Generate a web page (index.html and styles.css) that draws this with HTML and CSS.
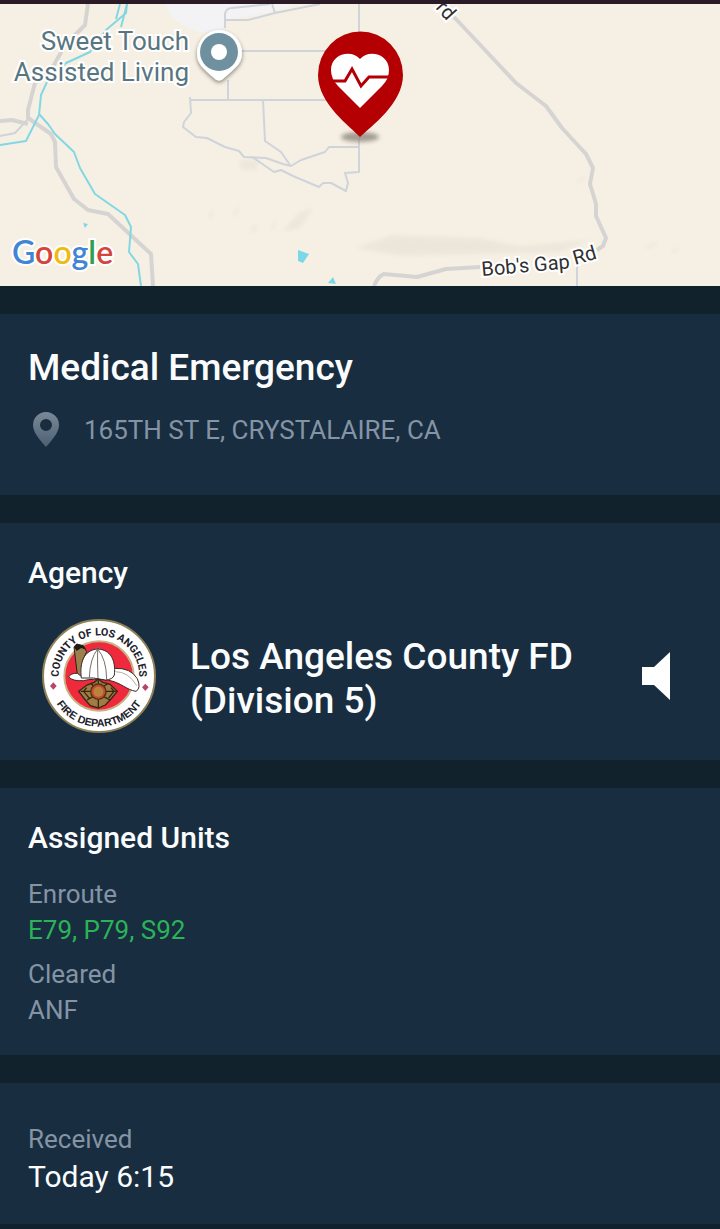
FILE: index.html
```html
<!DOCTYPE html>
<html lang="en">
<head>
  <meta charset="UTF-8">
  <meta name="viewport" content="width=device-width, initial-scale=1.0">
  <title>Medical Emergency</title>
  <link rel="stylesheet" href="styles.css">
</head>
<body>

<div class="map">
  <svg class="map-canvas" viewBox="0 4 720 282" preserveAspectRatio="xMidYMid slice" role="img" aria-label="Incident map">
    <defs>
      <filter id="soft" x="-50%" y="-50%" width="200%" height="200%">
        <feGaussianBlur stdDeviation="2"/>
      </filter>
      <filter id="drop" x="-30%" y="-30%" width="160%" height="170%">
        <feDropShadow dx="0" dy="2" stdDeviation="2" flood-color="#000" flood-opacity=".45"/>
      </filter>
    </defs>
    <rect x="0" y="4" width="720" height="282" fill="#f6f0e4"/>

    <!-- terrain -->
    <path d="M166 4H296L270 12L225 20L222 32H200L188 28L172 18Z" fill="#f3f3f5"/>
    <g fill="#e6e0d5" opacity=".6" filter="url(#soft)">
      <path d="M355 248L392 235L480 238L520 246L590 240L560 252L400 256Z"/>
      <path d="M282 232L298 214L314 206L300 228Z"/>
      <path d="M240 160H258L256 170H240ZM208 216L214 208L212 220ZM232 215L242 203L236 216ZM250 232L256 222V232ZM270 230L276 216L274 228Z"/>
      <path d="M642 248L660 241L652 248ZM670 253L680 245L676 253ZM576 182L586 174L582 182Z"/>
    </g>

    <!-- minor roads -->
    <g fill="none" stroke="#cfd3da" stroke-width="2" stroke-linejoin="round">
      <path d="M225 28V14Q226 8 232 8L252 6L270 4M225 20H248L275 13L320 4M272 4L275 13"/>
      <path d="M242 51H330M228 80V100M359 4V34M190 97L191 113L184 122L183 127L196 137L207 138L225 147L239 151L244 157L266 158L283 164L291 166L301 160L325 152L329 147H359"/>
      <path d="M190 100H330M263 100L265 141L281 152L290 165M252 157L261 163L274 172L281 170L293 176L319 187L323 183H331L346 191L348 183L345 173L359 172V137"/>
      <path d="M0 136L15 133L28 119M574 255L577 266V286"/>
    </g>

    <!-- major roads -->
    <g fill="none" stroke="#d6d4d2" stroke-width="4" stroke-linejoin="round">
      <path d="M88 4L85 25L65 45L54 65L35 83L28 110V118L51 134L55 142L56 167L74 199L88 210L108 214L151 254L153 286"/>
      <path d="M0 121L12 120L28 124"/>
      <path d="M454 17L516 83L546 106L562 128L586 154L593 168L590 184L596 204V216L606 238L603 246L597 250M480 267L446 269L417 277L384 274Q378 276 374 286"/>
    </g>

    <!-- water -->
    <g fill="none" stroke="#83d7e3" stroke-width="2" stroke-linejoin="round">
      <path d="M127 4L126 13L106 30L90 52L66 63L47 82L41 95L39 115L26 141L0 145"/>
      <path d="M120 4L116 19M127 4L121 27M39 114L48 124L55 134L74 152L80 168L95 194L125 215L131 227L129 252L138 264L141 286"/>
    </g>
    <path d="M298 250L309 254L303 263L298 261ZM328 283L333 277L336 284ZM83 223L88 224L85 228Z" fill="#7bd8e8"/>

    <!-- place labels -->
    <g class="place-label" text-anchor="end">
      <text x="189" y="50">Sweet Touch</text>
      <text x="189" y="81">Assisted Living</text>
    </g>
    <text class="road-label" transform="translate(482 276) rotate(-5)">Bob's Gap</text>
    <text class="road-label" transform="translate(575 265) rotate(-16)">Rd</text>
    <text class="road-label" transform="translate(435 8) rotate(48)">rd</text>

    <!-- place marker -->
    <path d="M219 30A23 23 0 0 1 242 53C242 64 235 68 224 78Q219 83 214 78C203 68 197 64 197 53A23 23 0 0 1 219 30Z" fill="#fff" filter="url(#drop)"/>
    <circle cx="219" cy="52" r="19" fill="#6f919f"/>
    <circle cx="219" cy="52" r="8" fill="#fff"/>

    <!-- incident marker -->
    <ellipse cx="360" cy="137" rx="19" ry="5" fill="#8d867c" opacity=".8" filter="url(#soft)"/>
    <path d="M360 137C351 127 318 104 318 75A42 43 0 0 1 403 75C403 104 370 127 360 137Z" fill="#b40003"/>
    <path d="M360 108L338 86Q331 79 331 70C331 54 351 49 360 59C369 49 389 54 389 70Q389 79 382 86Z" fill="#fff"/>
    <path d="M331 81H345L352 69L361 86L369 77H390" fill="none" stroke="#b40003" stroke-width="3"/>

    <text class="map-brand" x="12" y="264"><tspan fill="#4285d4">G</tspan><tspan fill="#d5443c">o</tspan><tspan fill="#efba15">o</tspan><tspan fill="#4285d4">g</tspan><tspan fill="#2f9e50">l</tspan><tspan fill="#d5443c">e</tspan></text>
  </svg>
</div>

<div class="cards">
  <div class="card incident">
    <h1>Medical Emergency</h1>
    <p class="address">
      <svg class="address-icon" viewBox="0 0 28 36" aria-hidden="true">
        <defs>
          <linearGradient id="pin" x1="0" y1="0" x2="0" y2="1">
            <stop offset="0" stop-color="#7b8997"/>
            <stop offset="1" stop-color="#4b6072"/>
          </linearGradient>
        </defs>
        <path fill="url(#pin)" fill-rule="evenodd" d="M14 0A13 13 0 0 1 27 13C27 21 19 29 14 35C9 29 1 21 1 13A13 13 0 0 1 14 0ZM14 7A6 6 0 1 0 14 19A6 6 0 1 0 14 7Z"/>
      </svg>
      165TH ST E, CRYSTALAIRE, CA
    </p>
  </div>

  <div class="card">
    <h2>Agency</h2>
    <div class="agency">
      <svg class="seal" viewBox="36 26 342 342" role="img" aria-label="Agency seal">
        <defs>
          <path id="arc-top" d="M93 237A121 121 0 1 1 321 237"/>
          <path id="arc-bottom" d="M55 197A152 152 0 0 0 359 197"/>
        </defs>
        <circle cx="207" cy="197" r="168" fill="#fff" stroke="#8f8155" stroke-width="6"/>
        <circle cx="207" cy="197" r="104" fill="#ee2a3c" stroke="#c9b185" stroke-width="6"/>
        <g class="seal-text" text-anchor="middle">
          <text><textPath href="#arc-top" startOffset="50%">COUNTY OF LOS ANGELES</textPath></text>
          <text class="seal-bottom"><textPath href="#arc-bottom" startOffset="50%">FIRE DEPARTMENT</textPath></text>
        </g>
        <path d="M70 216L80 227L70 238L60 227ZM346 220L356 231L346 242L336 231Z" fill="#b5486a"/>
        <!-- helmet -->
        <path d="M132 110L140 101L160 106L170 124L158 150L154 205L142 192Z" fill="#9b804d" stroke="#2d2215" stroke-width="3"/>
        <path d="M132 110L140 101L160 106L168 118L154 113L140 122Z" fill="#211b16"/>
        <path d="M116 200Q122 188 142 189L154 198Q200 186 254 174Q302 172 322 205Q334 234 318 243C292 240 272 216 236 210Q190 203 160 211Q128 213 116 200Z" fill="#fff" stroke="#3c2a25" stroke-width="3"/>
        <path d="M154 203C148 158 162 118 203 116C242 118 258 150 253 194Q248 208 226 209Q190 200 154 203Z" fill="#fff" stroke="#3c2a25" stroke-width="3"/>
        <path d="M203 116Q180 144 178 202M203 116Q202 150 204 204M203 116Q229 146 230 207M197 116L203 109L212 116" fill="none" stroke="#77706b" stroke-width="3"/>
        <path d="M256 184Q296 184 320 226" fill="none" stroke="#b5aaa5" stroke-width="3"/>
        <!-- badge -->
        <path d="M205 206L218 216L240 222L262 243L243 266L226 284L205 293L181 286L166 269L146 243L171 224L193 216Z" fill="#a07c42" stroke="#362713" stroke-width="4"/>
        <path d="M182 219L195 231M232 221L216 231M171 269L190 258M240 269L220 258M205 210V220M205 268V290M152 243L182 243M228 243H258M170 232L161 243L178 264M243 232L252 243L236 263" stroke="#362713" stroke-width="4" fill="none"/>
        <circle cx="205" cy="244" r="23" fill="#c84a31" stroke="#4b3518" stroke-width="4"/>
        <circle cx="205" cy="244" r="15" fill="#b9833e"/>
      </svg>
      <p class="agency-name">Los Angeles County FD (Division 5)</p>
      <button class="listen" type="button" aria-label="Listen">
        <svg viewBox="0 0 28 48" aria-hidden="true"><path d="M0 15H12L28 0V48L12 33H0Z" fill="#fff"/></svg>
      </button>
    </div>
  </div>

  <div class="card">
    <h2>Assigned Units</h2>
    <dl class="units">
      <dt>Enroute</dt>
      <dd class="enroute">E79, P79, S92</dd>
      <dt>Cleared</dt>
      <dd>ANF</dd>
    </dl>
  </div>

  <div class="card received">
    <p class="label">Received</p>
    <p class="time">Today 6:15</p>
  </div>
</div>

</body>
</html>
```
FILE: styles.css
```css
* {
  box-sizing: border-box;
}

body {
  margin: 0;
  background-color: #12222d;
  color: #fafcfd;
  font-family: Roboto, Arial, sans-serif;
  font-size: 26px;
  line-height: 36px;
}

h1, h2, p, dl, dd {
  margin: 0;
}

.map {
  border-top: 4px solid #2a1b27;
}

.map-canvas {
  display: block;
  width: 100%;
  height: 282px;
}

.place-label {
  font-size: 26px;
  fill: #587580;
  stroke: #fff;
  stroke-width: 4px;
  paint-order: stroke;
}

.road-label {
  font-size: 20px;
  fill: #303030;
  stroke: #fff;
  stroke-width: 4px;
  paint-order: stroke;
}

.map-brand {
  font-family: Lato, sans-serif;
  font-size: 32px;
  font-weight: 600;
  stroke: #fff;
  stroke-width: 4px;
  paint-order: stroke;
}

.cards {
  display: flex;
  flex-direction: column;
  gap: 28px;
  padding: 28px 0 5px;
}

.card {
  padding: 32px 28px 27px;
  background-color: #182d40;
}

.incident {
  padding-bottom: 47px;
}

h1, .agency-name {
  font-size: 37px;
  font-weight: 500;
  line-height: 44px;
}

h2 {
  font-size: 30px;
  font-weight: 500;
  line-height: 36px;
}

.address {
  display: flex;
  align-items: center;
  gap: 24px;
  margin-top: 22px;
  padding-left: 4px;
  color: #8494a5;
}

.address-icon {
  width: 28px;
  height: 36px;
}

.agency {
  display: flex;
  align-items: center;
  gap: 34px;
  margin-top: 28px;
  padding: 0 22px 0 14px;
}

.seal {
  flex: none;
  width: 114px;
  height: 114px;
}

.seal-text {
  font-size: 32px;
  font-weight: 700;
  fill: #20202a;
}

.seal-bottom {
  font-family: "Liberation Sans", Arial, sans-serif;
}

.agency-name {
  flex: 1;
  padding-top: 6px;
}

.listen {
  flex: none;
  padding: 0;
  border: 0;
  background: none;
  cursor: pointer;
}

.listen svg {
  display: block;
  width: 28px;
  height: 48px;
}

.units {
  margin-top: 20px;
  color: #8494a5;
}

.units dd + dt {
  margin-top: 8px;
}

.units .enroute {
  color: #2bb457;
}

.received {
  padding-top: 38px;
}

.label {
  color: #8494a5;
}

.time {
  font-size: 30px;
  line-height: 40px;
}
```
